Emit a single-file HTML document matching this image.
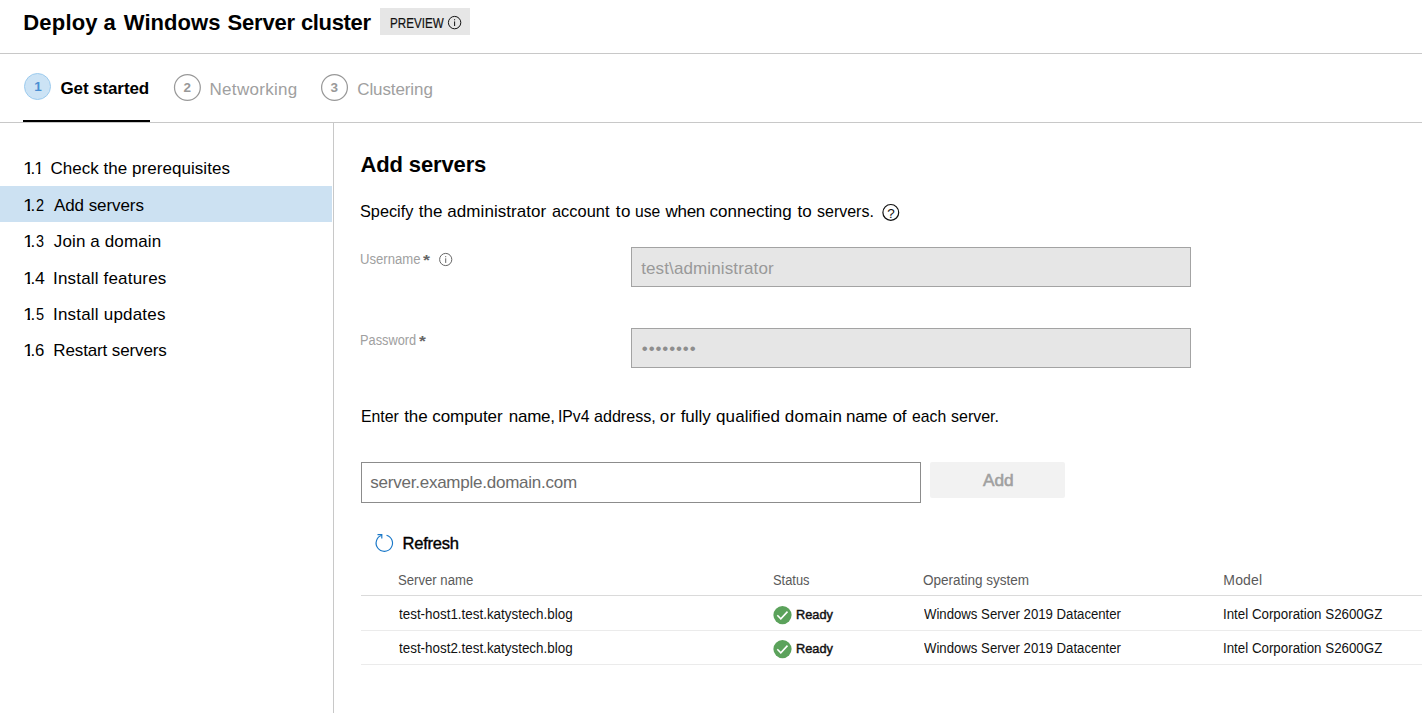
<!DOCTYPE html>
<html lang="en"><head><meta charset="utf-8"><title>Deploy a Windows Server cluster</title>
<style>
html,body{margin:0;padding:0}
body{width:1422px;height:713px;overflow:hidden;position:relative;background:#fff;font-family:"Liberation Sans",sans-serif;color:#000}
.a{position:absolute}
.t{position:absolute;white-space:pre;transform-origin:0 0}
.hl{position:absolute;left:361px;right:0;height:1px}
svg{position:absolute;overflow:visible}
</style></head>
<body>
<div class="a" style="left:0;top:53px;width:1422px;height:1px;background:#c8c8c8"></div>
<div class="a" style="left:380px;top:8px;width:90px;height:27px;background:#e6e6e6"></div>
<svg style="left:447px;top:15px" width="15" height="15" viewBox="0 0 15 15"><circle cx="7.6" cy="7.6" r="6.2" fill="none" stroke="#111" stroke-width="1"/><rect x="7.1" y="6.4" width="1" height="4.6" fill="#111"/><rect x="7.1" y="4.2" width="1" height="1.1" fill="#111"/></svg>
<div class="a" style="left:0;top:122px;width:1422px;height:1px;background:#c8c8c8"></div>
<div class="a" style="left:23px;top:120px;width:127px;height:2px;background:#000"></div>
<div class="a" style="left:333px;top:123px;width:1px;height:590px;background:#c8c8c8"></div>
<div class="a" style="left:24px;top:73px;width:25px;height:25px;border:1px solid #9ccbee;border-radius:50%;background:#cce3f5"></div>
<svg style="left:173px;top:73px" width="29" height="29" viewBox="0 0 29 29"><circle cx="14.4" cy="14.5" r="12.9" fill="none" stroke="#999" stroke-width="1.25"/></svg>
<svg style="left:320px;top:73px" width="29" height="29" viewBox="0 0 29 29"><circle cx="14.5" cy="14.5" r="12.9" fill="none" stroke="#999" stroke-width="1.25"/></svg>
<div class="a" style="left:0;top:186px;width:332px;height:36px;background:#cce1f2"></div>
<div class="a" style="left:631px;top:247px;width:558px;height:38px;border:1px solid #a3a3a3;background:#e6e6e6"></div>
<div class="a" style="left:631px;top:328px;width:558px;height:38px;border:1px solid #a3a3a3;background:#e6e6e6"></div>
<div class="a" style="left:361px;top:462px;width:558px;height:39px;border:1px solid #8c8c8c;background:#fff"></div>
<div class="a" style="left:930px;top:462px;width:135px;height:36px;border-radius:2px;background:#f2f2f2"></div>
<svg style="left:882px;top:204px" width="18" height="18" viewBox="0 0 18 18"><circle cx="8.8" cy="8.4" r="7.9" fill="none" stroke="#111" stroke-width="1.2"/></svg>
<svg style="left:438px;top:252px" width="15" height="15" viewBox="0 0 15 15"><circle cx="7.7" cy="7.5" r="6.1" fill="none" stroke="#666" stroke-width="1"/><rect x="7.2" y="6.3" width="1" height="4.6" fill="#666"/><rect x="7.2" y="4.1" width="1" height="1.1" fill="#666"/></svg>
<svg style="left:374px;top:533px" width="21" height="21" viewBox="0 0 21 21"><path d="M12.5 2.2 A8.2 8.2 0 1 1 7.8 2.3" fill="none" stroke="#1a78c8" stroke-width="1.15"/><path d="M3.5 1.6 H7.8 V5.6" fill="none" stroke="#1a78c8" stroke-width="1.15"/></svg>
<div class="hl" style="top:595px;background:#dadada"></div>
<div class="hl" style="top:630px;background:#ebebeb"></div>
<div class="hl" style="top:664px;background:#ebebeb"></div>
<svg style="left:773px;top:606px" width="19" height="19" viewBox="0 0 19 19"><circle cx="9.5" cy="9.1" r="9.1" fill="#5ba25b"/><path d="M4.3 9.3 L7.8 12.8 L14.5 5.6" fill="none" stroke="#fff" stroke-width="1.55"/></svg>
<svg style="left:773px;top:640px" width="19" height="19" viewBox="0 0 19 19"><circle cx="9.5" cy="9.1" r="9.1" fill="#5ba25b"/><path d="M4.3 9.3 L7.8 12.8 L14.5 5.6" fill="none" stroke="#fff" stroke-width="1.55"/></svg>
<div class="a" style="left:0;top:0"><span class="t" style="left:23.25px;top:10.00px;font-size:22px;line-height:26px;font-weight:700;letter-spacing:0.200px">Deploy</span> <span class="t" style="left:103.38px;top:10.00px;font-size:22px;line-height:26px;font-weight:700">a</span> <span class="t" style="left:123.80px;top:10.00px;font-size:22px;line-height:26px;font-weight:700;letter-spacing:0.060px">Windows</span> <span class="t" style="left:227.48px;top:10.00px;font-size:22px;line-height:26px;font-weight:700;letter-spacing:-0.164px">Server</span> <span class="t" style="left:300.90px;top:10.00px;font-size:22px;line-height:26px;font-weight:700;letter-spacing:-0.344px">cluster</span></div>
<span class="t" style="left:389.68px;top:15.00px;font-size:14px;line-height:17px;transform:scaleX(0.8323);color:#111;-webkit-text-stroke:0.2px #111">PREVIEW</span>
<span class="t" style="left:60.45px;top:79.00px;font-size:17px;line-height:20px;font-weight:700;letter-spacing:-0.101px">Get started</span>
<span class="t" style="left:209.53px;top:80.00px;font-size:17px;line-height:20px;letter-spacing:0.304px;color:#a0a0a0">Networking</span>
<span class="t" style="left:357.24px;top:80.00px;font-size:17px;line-height:20px;letter-spacing:-0.104px;color:#a0a0a0">Clustering</span>
<div class="a" style="left:0;top:0"><span class="t" style="left:22.95px;top:159.00px;font-size:17px;line-height:20px;transform:scaleX(1.1500);clip-path:polygon(0 0,10px 0,10px 12.90px,6.15px 12.90px,6.15px 20px,3.9px 20px,3.9px 12.90px,0 12.90px)">1</span><span class="t" style="left:30.39px;top:159.00px;font-size:17px;line-height:20px">.</span><span class="t" style="left:34.22px;top:159.00px;font-size:17px;line-height:20px;clip-path:polygon(0 0,10px 0,10px 12.90px,6.15px 12.90px,6.15px 20px,3.9px 20px,3.9px 12.90px,0 12.90px)">1</span></div>
<span class="t" style="left:50.39px;top:159.00px;font-size:17px;line-height:20px;letter-spacing:0.043px">Check the prerequisites</span>
<div class="a" style="left:0;top:0"><span class="t" style="left:22.95px;top:196.00px;font-size:17px;line-height:20px;transform:scaleX(1.1500);clip-path:polygon(0 0,10px 0,10px 12.90px,6.15px 12.90px,6.15px 20px,3.9px 20px,3.9px 12.90px,0 12.90px)">1</span><span class="t" style="left:30.39px;top:196.00px;font-size:17px;line-height:20px">.</span><span class="t" style="left:35.90px;top:196.00px;font-size:17px;line-height:20px;transform:scaleX(0.8537)">2</span></div>
<span class="t" style="left:53.99px;top:196.00px;font-size:17px;line-height:20px;letter-spacing:-0.080px">Add servers</span>
<div class="a" style="left:0;top:0"><span class="t" style="left:22.95px;top:231.80px;font-size:17px;line-height:20px;transform:scaleX(1.1500);clip-path:polygon(0 0,10px 0,10px 13.10px,6.15px 13.10px,6.15px 20px,3.9px 20px,3.9px 13.10px,0 13.10px)">1</span><span class="t" style="left:30.39px;top:231.80px;font-size:17px;line-height:20px">.</span><span class="t" style="left:35.99px;top:231.80px;font-size:17px;line-height:20px;transform:scaleX(0.8463)">3</span></div>
<span class="t" style="left:53.85px;top:231.80px;font-size:17px;line-height:20px;letter-spacing:0.117px">Join a domain</span>
<div class="a" style="left:0;top:0"><span class="t" style="left:22.95px;top:269.00px;font-size:17px;line-height:20px;transform:scaleX(1.1500);clip-path:polygon(0 0,10px 0,10px 12.90px,6.15px 12.90px,6.15px 20px,3.9px 20px,3.9px 12.90px,0 12.90px)">1</span><span class="t" style="left:30.39px;top:269.00px;font-size:17px;line-height:20px">.</span><span class="t" style="left:35.34px;top:269.00px;font-size:17px;line-height:20px;transform:scaleX(1.0371)">4</span></div>
<span class="t" style="left:53.04px;top:269.00px;font-size:17px;line-height:20px;letter-spacing:0.178px">Install features</span>
<div class="a" style="left:0;top:0"><span class="t" style="left:22.95px;top:304.80px;font-size:17px;line-height:20px;transform:scaleX(1.1500);clip-path:polygon(0 0,10px 0,10px 13.10px,6.15px 13.10px,6.15px 20px,3.9px 20px,3.9px 13.10px,0 13.10px)">1</span><span class="t" style="left:30.39px;top:304.80px;font-size:17px;line-height:20px">.</span><span class="t" style="left:35.87px;top:304.80px;font-size:17px;line-height:20px;transform:scaleX(0.8563)">5</span></div>
<span class="t" style="left:53.04px;top:304.80px;font-size:17px;line-height:20px;letter-spacing:0.196px">Install updates</span>
<div class="a" style="left:0;top:0"><span class="t" style="left:22.95px;top:341.00px;font-size:17px;line-height:20px;transform:scaleX(1.1500);clip-path:polygon(0 0,10px 0,10px 12.90px,6.15px 12.90px,6.15px 20px,3.9px 20px,3.9px 12.90px,0 12.90px)">1</span><span class="t" style="left:30.39px;top:341.00px;font-size:17px;line-height:20px">.</span><span class="t" style="left:35.08px;top:341.00px;font-size:17px;line-height:20px;transform:scaleX(0.9851)">6</span></div>
<span class="t" style="left:53.34px;top:341.00px;font-size:17px;line-height:20px;letter-spacing:-0.131px">Restart servers</span>
<span class="t" style="left:360.43px;top:152.00px;font-size:22px;line-height:26px;font-weight:700;letter-spacing:-0.126px">Add servers</span>
<div class="a" style="left:0;top:0"><span class="t" style="left:360.46px;top:201.60px;font-size:17px;line-height:20px;transform:scaleX(0.9581)">Specify</span> <span class="t" style="left:418.84px;top:201.60px;font-size:17px;line-height:20px;letter-spacing:-0.022px">the</span> <span class="t" style="left:447.32px;top:201.60px;font-size:17px;line-height:20px;letter-spacing:0.054px">administrator</span> <span class="t" style="left:552.13px;top:201.60px;font-size:17px;line-height:20px;transform:scaleX(0.9651)">account</span> <span class="t" style="left:615.85px;top:201.60px;font-size:17px;line-height:20px;letter-spacing:0.396px">to</span> <span class="t" style="left:635.21px;top:201.60px;font-size:17px;line-height:20px;transform:scaleX(0.9191)">use</span> <span class="t" style="left:665.40px;top:201.60px;font-size:17px;line-height:20px;letter-spacing:-0.239px">when</span> <span class="t" style="left:709.60px;top:201.60px;font-size:17px;line-height:20px;letter-spacing:-0.006px">connecting</span> <span class="t" style="left:797.50px;top:201.60px;font-size:17px;line-height:20px">to</span> <span class="t" style="left:817.06px;top:201.60px;font-size:17px;line-height:20px;transform:scaleX(0.9409)">servers.</span></div>
<span class="t" style="left:360.21px;top:251.00px;font-size:14px;line-height:17px;transform:scaleX(0.9374);color:#a0a0a0">Username</span>
<span class="t" style="left:423.35px;top:251.00px;font-size:15px;line-height:18px;font-weight:700;transform:scaleX(1.1836);color:#666">*</span>
<span class="t" style="left:360.13px;top:332.20px;font-size:14px;line-height:17px;transform:scaleX(0.9130);color:#a0a0a0">Password</span>
<span class="t" style="left:418.78px;top:332.20px;font-size:15px;line-height:18px;font-weight:700;transform:scaleX(1.1731);color:#666">*</span>
<span class="t" style="left:641.15px;top:258.60px;font-size:17px;line-height:20px;letter-spacing:0.124px;color:#999">test\administrator</span>
<div class="a" style="left:0;top:0"><span class="t" style="left:360.54px;top:407.20px;font-size:17px;line-height:20px;transform:scaleX(0.9312)">Enter</span> <span class="t" style="left:404.15px;top:407.20px;font-size:17px;line-height:20px;letter-spacing:-0.034px">the</span> <span class="t" style="left:432.24px;top:407.20px;font-size:17px;line-height:20px;letter-spacing:-0.071px">computer</span> <span class="t" style="left:508.78px;top:407.20px;font-size:17px;line-height:20px;letter-spacing:-0.242px">name,</span> <span class="t" style="left:558.23px;top:407.20px;font-size:17px;line-height:20px;transform:scaleX(0.9244)">IPv4</span> <span class="t" style="left:594.05px;top:407.20px;font-size:17px;line-height:20px;transform:scaleX(0.9471)">address,</span> <span class="t" style="left:659.85px;top:407.20px;font-size:17px;line-height:20px;letter-spacing:0.387px">or</span> <span class="t" style="left:680.71px;top:407.20px;font-size:17px;line-height:20px;letter-spacing:-0.062px">fully</span> <span class="t" style="left:716.12px;top:407.20px;font-size:17px;line-height:20px;letter-spacing:0.056px">qualified</span> <span class="t" style="left:784.80px;top:407.20px;font-size:17px;line-height:20px;letter-spacing:0.269px">domain</span> <span class="t" style="left:846.07px;top:407.20px;font-size:17px;line-height:20px;letter-spacing:-0.360px">name</span> <span class="t" style="left:892.44px;top:407.20px;font-size:17px;line-height:20px;letter-spacing:-0.041px">of</span> <span class="t" style="left:911.50px;top:407.20px;font-size:17px;line-height:20px;transform:scaleX(0.9282)">each</span> <span class="t" style="left:950.83px;top:407.20px;font-size:17px;line-height:20px;transform:scaleX(0.9407)">server.</span></div>
<span class="t" style="left:370.37px;top:473.20px;font-size:17px;line-height:20px;letter-spacing:-0.243px;color:#6b6b6b">server.example.domain.com</span>
<span class="t" style="left:982.77px;top:469.70px;font-size:16.5px;line-height:20px;transform:scaleX(1.0451);color:#a0a0a0;-webkit-text-stroke:0.55px #a0a0a0">Add</span>
<span class="t" style="left:402.50px;top:532.70px;font-size:16.5px;line-height:20px;letter-spacing:-0.233px;-webkit-text-stroke:0.4px #000">Refresh</span>
<span class="t" style="left:398.07px;top:572.00px;font-size:14px;line-height:17px;transform:scaleX(0.9387);color:#5a5a5a">Server name</span>
<span class="t" style="left:772.80px;top:572.00px;font-size:14px;line-height:17px;transform:scaleX(0.9211);color:#5a5a5a">Status</span>
<span class="t" style="left:923.46px;top:572.00px;font-size:14px;line-height:17px;transform:scaleX(0.9670);color:#5a5a5a">Operating system</span>
<span class="t" style="left:1223.31px;top:572.00px;font-size:14px;line-height:17px;letter-spacing:0.182px;color:#5a5a5a">Model</span>
<span class="t" style="left:399.17px;top:606.20px;font-size:14px;line-height:17px;transform:scaleX(0.9574);color:#111">test-host1.test.katystech.blog</span>
<span class="t" style="left:796.38px;top:607.00px;font-size:13.2px;line-height:16px;transform:scaleX(0.9676);color:#111;-webkit-text-stroke:0.45px #111">Ready</span>
<span class="t" style="left:923.55px;top:606.20px;font-size:14px;line-height:17px;transform:scaleX(0.9411);color:#111">Windows Server 2019 Datacenter</span>
<span class="t" style="left:1222.96px;top:606.20px;font-size:14px;line-height:17px;transform:scaleX(0.9520);color:#111">Intel Corporation S2600GZ</span>
<span class="t" style="left:399.17px;top:640.20px;font-size:14px;line-height:17px;transform:scaleX(0.9574);color:#111">test-host2.test.katystech.blog</span>
<span class="t" style="left:796.38px;top:641.00px;font-size:13.2px;line-height:16px;transform:scaleX(0.9676);color:#111;-webkit-text-stroke:0.45px #111">Ready</span>
<span class="t" style="left:923.55px;top:640.20px;font-size:14px;line-height:17px;transform:scaleX(0.9411);color:#111">Windows Server 2019 Datacenter</span>
<span class="t" style="left:1222.96px;top:640.20px;font-size:14px;line-height:17px;transform:scaleX(0.9520);color:#111">Intel Corporation S2600GZ</span>
<span class="t" style="left:34.2px;top:78.6px;font-size:13.5px;line-height:16px;font-weight:700;color:#4a8fd3">1</span>
<span class="t" style="left:183.4px;top:80px;font-size:13.5px;line-height:16px;font-weight:700;color:#999">2</span>
<span class="t" style="left:330.6px;top:80px;font-size:13.5px;line-height:16px;font-weight:700;color:#999">3</span>
<span class="t" style="left:887.3px;top:205.6px;font-size:13.5px;line-height:16px;color:#111">?</span>
<span class="t" style="left:641.8px;top:339.4px;font-size:17px;line-height:20px;letter-spacing:0.89px;color:#8e8e8e">••••••••</span>
</body></html>
